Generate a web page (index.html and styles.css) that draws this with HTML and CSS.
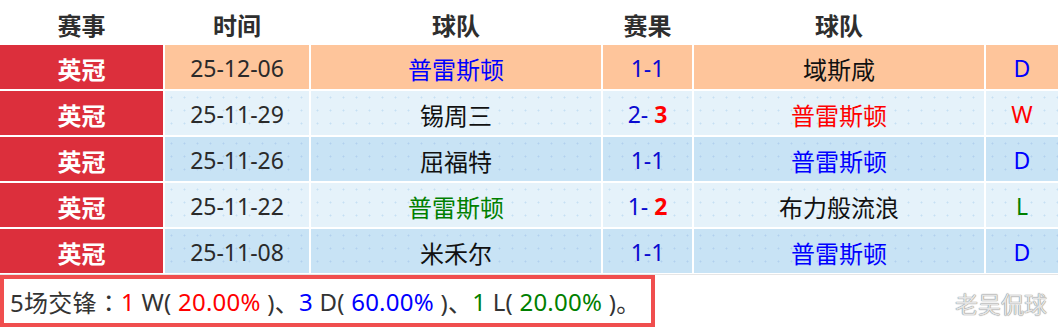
FILE: index.html
```html
<!DOCTYPE html>
<html lang="zh">
<head>
<meta charset="utf-8">
<title>英冠交锋</title>
<link rel="stylesheet" href="styles.css">
</head>
<body>
<div class="page">
  <div class="table">
    <div class="th">赛事</div>
    <div class="th">时间</div>
    <div class="th">球队</div>
    <div class="th">赛果</div>
    <div class="th">球队</div>
    <div class="th"></div>

    <div class="td league">英冠</div>
    <div class="td date r-peach">25-12-06</div>
    <div class="td team r-peach blue">普雷斯顿</div>
    <div class="td score r-peach">1-1</div>
    <div class="td team r-peach">域斯咸</div>
    <div class="td res r-peach blue">D</div>

    <div class="td league">英冠</div>
    <div class="td date r-light">25-11-29</div>
    <div class="td team r-light">锡周三</div>
    <div class="td score r-light">2- <b class="red">3</b></div>
    <div class="td team r-light red">普雷斯顿</div>
    <div class="td res r-light red">W</div>

    <div class="td league">英冠</div>
    <div class="td date r-dark">25-11-26</div>
    <div class="td team r-dark">屈福特</div>
    <div class="td score r-dark">1-1</div>
    <div class="td team r-dark blue">普雷斯顿</div>
    <div class="td res r-dark blue">D</div>

    <div class="td league">英冠</div>
    <div class="td date r-light">25-11-22</div>
    <div class="td team r-light green">普雷斯顿</div>
    <div class="td score r-light">1- <b class="red">2</b></div>
    <div class="td team r-light">布力般流浪</div>
    <div class="td res r-light green">L</div>

    <div class="td league">英冠</div>
    <div class="td date r-dark">25-11-08</div>
    <div class="td team r-dark">米禾尔</div>
    <div class="td score r-dark">1-1</div>
    <div class="td team r-dark blue">普雷斯顿</div>
    <div class="td res r-dark blue">D</div>
  </div>
  <div class="rule"></div>
  <div class="summary">5场交锋<span class="colon">：</span><span class="red">1</span> W( <span class="red">20.00%</span> )、<span class="blue">3</span> D( <span class="blue">60.00%</span> )、<span class="green">1</span> L( <span class="green">20.00%</span> )。</div>
  <div class="watermark">老吴侃球</div>
</div>
</body>
</html>
```

FILE: styles.css
```css
html, body {
  margin: 0;
  padding: 0;
  background: #ffffff;
}
body {
  font-family: "Noto Sans", "Noto Sans CJK SC", sans-serif;
  color: #333333;
}
.page {
  position: relative;
  width: 1058px;
  height: 329px;
  overflow: hidden;
}
.table {
  display: grid;
  grid-template-columns: 163px 144px 290px 89px 290px 72px;
  grid-template-rows: 43px repeat(5, 44px);
  column-gap: 2px;
  row-gap: 2px;
}
.th {
  display: flex;
  align-items: center;
  justify-content: center;
  padding-top: 6px;
  font-family: "Noto Sans CJK SC", sans-serif;
  font-weight: 700;
  font-size: 24px;
  color: #2e2e2e;
}
.td {
  display: flex;
  align-items: center;
  justify-content: center;
  padding-top: 2px;
  font-size: 23px;
  color: #222222;
  white-space: pre;
}
.league {
  background: #dc2f3c;
  color: #ffffff;
  font-family: "Noto Sans CJK SC", sans-serif;
  font-weight: 700;
  font-size: 24px;
}
.team {
  font-family: "Noto Sans CJK SC", sans-serif;
  font-size: 24px;
  color: #111111;
}
.date {
  color: #2a2a2a;
}
.score {
  color: #0a0ad0;
}
.score b {
  font-weight: 700;
}
.r-peach {
  background-color: #fec59b;
}
.r-light {
  background-color: #e5f2fa;
  background-image: radial-gradient(circle, rgba(140, 190, 230, 0.35) 0.8px, transparent 1.2px);
  background-size: 13px 13px;
}
.r-dark {
  background-color: #c8e3f5;
  background-image: radial-gradient(circle, rgba(120, 160, 220, 0.28) 0.8px, transparent 1.2px);
  background-size: 13px 13px;
}
.td.blue, .blue { color: #0000ff; }
.td.red, .red { color: #ff0000; }
.td.green, .green { color: #008000; }
.rule {
  height: 1px;
  margin-top: 1px;
  background: #e6e6e6;
}
.summary {
  box-sizing: border-box;
  width: 655px;
  height: 52px;
  border: 4px solid #f04e4e;
  display: flex;
  align-items: center;
  padding-left: 6px;
  padding-top: 1px;
  font-size: 24px;
  letter-spacing: 0.25px;
  color: #333333;
  white-space: pre;
}
.colon {
  font-family: "Noto Sans CJK TC", sans-serif;
}
.watermark {
  position: absolute;
  right: 11px;
  top: 286px;
  font-family: "Noto Sans CJK SC", sans-serif;
  font-size: 23px;
  color: #e4e4e4;
  text-shadow: 0 0 1px #7a7a7a, 0 0 1px #9a9a9a;
}
```
